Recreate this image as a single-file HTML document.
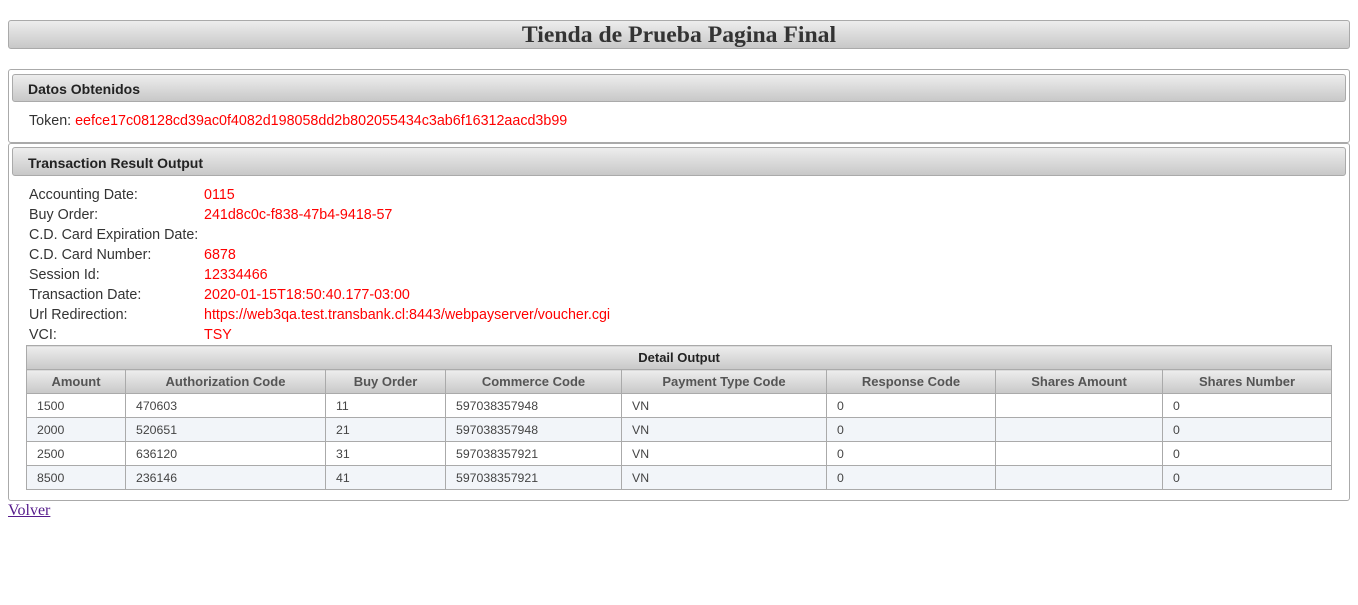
<!DOCTYPE html>
<html><head><meta charset="utf-8"><style>
*{box-sizing:border-box}
body{margin:0;width:1358px;height:605px;background:#fff;position:relative;font-family:"Liberation Sans",Arial,sans-serif;overflow:hidden}
.a{position:absolute}
.grad{background:linear-gradient(#ededed,#c8c8c8);border:1px solid #aaa;border-radius:3px}
.box{border:1px solid #aaa;border-radius:3px}
.hd{font-weight:bold;font-size:14px;color:#222;padding-left:15px;line-height:29px}
.lab{position:absolute;left:29px;font-size:14.3px;color:#333}
.val{position:absolute;left:204px;font-size:14.3px;color:#f00}
table{border-collapse:collapse;position:absolute;left:26px;top:345px;width:1305px;font-size:12.3px;table-layout:fixed}
td,th{border:1px solid #aaa;height:24px;padding:0 0 0 10px;color:#444;text-align:left;font-weight:normal}
th{background:linear-gradient(#ededed,#c8c8c8);text-align:center;font-weight:bold;padding:0;color:#555;font-size:13px}
th.cap{color:#222;height:24px}
tr.alt td{background:#f2f5f9}
</style></head><body>
<div class="a grad" style="left:8px;top:20px;width:1342px;height:29px;text-align:center;font-family:'Liberation Serif',serif;font-weight:bold;font-size:23.7px;line-height:28px;color:#333">Tienda de Prueba Pagina Final</div>

<div class="a box" style="left:8px;top:69px;width:1342px;height:74px"></div>
<div class="a grad hd" style="left:12px;top:74px;width:1334px;height:28px">Datos Obtenidos</div>
<div class="a" style="left:29px;top:113px;font-size:14.3px;color:#333">Token: <span style="color:#f00">eefce17c08128cd39ac0f4082d198058dd2b802055434c3ab6f16312aacd3b99</span></div>

<div class="a box" style="left:8px;top:143px;width:1342px;height:358px"></div>
<div class="a grad hd" style="left:12px;top:147px;width:1334px;height:29px;line-height:31px">Transaction Result Output</div>

<div class="lab" style="top:187px">Accounting Date:</div><div class="val" style="top:187px">0115</div>
<div class="lab" style="top:207px">Buy Order:</div><div class="val" style="top:207px">241d8c0c-f838-47b4-9418-57</div>
<div class="lab" style="top:227px">C.D. Card Expiration Date:</div>
<div class="lab" style="top:247px">C.D. Card Number:</div><div class="val" style="top:247px">6878</div>
<div class="lab" style="top:267px">Session Id:</div><div class="val" style="top:267px">12334466</div>
<div class="lab" style="top:287px">Transaction Date:</div><div class="val" style="top:287px">2020-01-15T18:50:40.177-03:00</div>
<div class="lab" style="top:307px">Url Redirection:</div><div class="val" style="top:307px">https://web3qa.test.transbank.cl:8443/webpayserver/voucher.cgi</div>
<div class="lab" style="top:327px">VCI:</div><div class="val" style="top:327px">TSY</div>

<table>
<colgroup><col style="width:99px"><col style="width:200px"><col style="width:120px"><col style="width:176px"><col style="width:205px"><col style="width:169px"><col style="width:167px"><col style="width:169px"></colgroup>
<tr><th class="cap" colspan="8">Detail Output</th></tr>
<tr><th>Amount</th><th>Authorization Code</th><th>Buy Order</th><th>Commerce Code</th><th>Payment Type Code</th><th>Response Code</th><th>Shares Amount</th><th>Shares Number</th></tr>
<tr><td>1500</td><td>470603</td><td>11</td><td>597038357948</td><td>VN</td><td>0</td><td></td><td>0</td></tr>
<tr class="alt"><td>2000</td><td>520651</td><td>21</td><td>597038357948</td><td>VN</td><td>0</td><td></td><td>0</td></tr>
<tr><td>2500</td><td>636120</td><td>31</td><td>597038357921</td><td>VN</td><td>0</td><td></td><td>0</td></tr>
<tr class="alt"><td>8500</td><td>236146</td><td>41</td><td>597038357921</td><td>VN</td><td>0</td><td></td><td>0</td></tr>
</table>

<a class="a" href="#" style="left:8px;top:502px;font-family:'Liberation Serif',serif;font-size:16px;color:#551a8b">Volver</a>
</body></html>
